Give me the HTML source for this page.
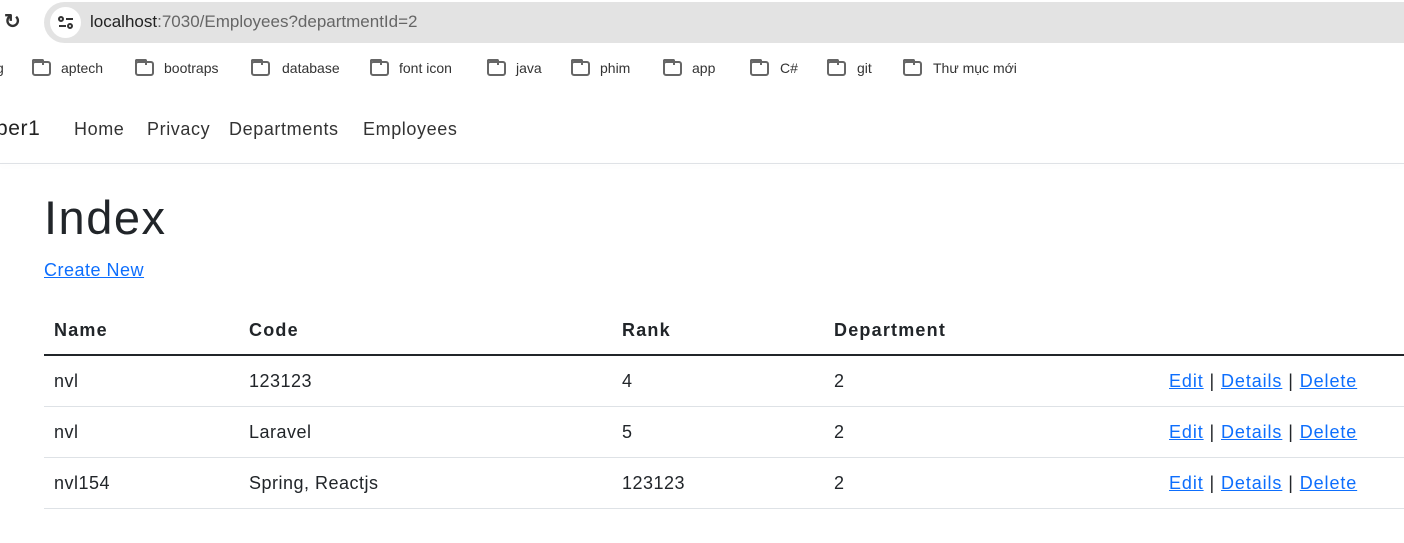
<!DOCTYPE html>
<html><head><meta charset="utf-8"><style>
*{margin:0;padding:0;box-sizing:border-box}
body{width:1404px;height:543px;overflow:hidden;background:#fff;font-family:"Liberation Sans",sans-serif;color:#212529;position:relative}
.abs{position:absolute;white-space:nowrap}
.addr{position:absolute;left:44px;top:2px;width:1380px;height:41px;background:#e3e3e3;border-radius:21px}
.lock{position:absolute;left:50px;top:7px;width:31px;height:31px;border-radius:50%;background:#fff}
.bm{position:absolute;top:60px;font-size:14px;color:#333}
.fold{position:absolute;top:61px;width:19px;height:15px;border:2px solid #666;border-radius:3px}
.fold:before{content:"";position:absolute;left:-2px;top:-4px;width:8px;height:4px;border:2px solid #666;border-bottom:none;border-radius:2px 2px 0 0}
.nav{position:absolute;top:119px;font-size:18px;color:#333;letter-spacing:0.6px}
a{color:#0d6efd;text-decoration:underline}
.hl{position:absolute;left:44px;width:1360px;height:1px;background:#dee2e6}
.r{position:absolute;font-size:18px;white-space:nowrap;letter-spacing:0.5px}
.b{font-weight:bold;letter-spacing:1.2px}
</style></head><body>
<div class="abs" style="left:4px;top:9px;font-size:20px;font-weight:bold;color:#333">↻</div>
<div class="addr"></div><div class="lock"></div>
<svg class="abs" style="left:56px;top:13px" width="20" height="20" viewBox="0 0 20 20" fill="none" stroke="#333" stroke-width="2"><circle cx="5" cy="6" r="2"/><line x1="10" y1="6" x2="17" y2="6"/><circle cx="14" cy="13" r="2"/><line x1="3" y1="13" x2="10" y2="13"/></svg>
<div class="abs" style="left:90px;top:12px;font-size:17px;color:#222">localhost<span style="color:#666">:7030/Employees?departmentId=2</span></div>
<div class="bm" style="left:-4px">g</div>
<div class="fold" style="left:32px"></div><div class="bm" style="left:61px">aptech</div>
<div class="fold" style="left:135px"></div><div class="bm" style="left:164px">bootraps</div>
<div class="fold" style="left:251px"></div><div class="bm" style="left:282px">database</div>
<div class="fold" style="left:370px"></div><div class="bm" style="left:399px">font icon</div>
<div class="fold" style="left:487px"></div><div class="bm" style="left:516px">java</div>
<div class="fold" style="left:571px"></div><div class="bm" style="left:600px">phim</div>
<div class="fold" style="left:663px"></div><div class="bm" style="left:692px">app</div>
<div class="fold" style="left:750px"></div><div class="bm" style="left:780px">C#</div>
<div class="fold" style="left:827px"></div><div class="bm" style="left:857px">git</div>
<div class="fold" style="left:903px"></div><div class="bm" style="left:933px">Thư mục mới</div>
<div class="abs" style="left:-4px;top:117px;font-size:21px;color:#222;letter-spacing:0.6px">per1</div>
<div class="nav" style="left:74px">Home</div>
<div class="nav" style="left:147px">Privacy</div>
<div class="nav" style="left:229px">Departments</div>
<div class="nav" style="left:363px">Employees</div>
<div class="abs" style="left:0;top:163px;width:1404px;height:1px;background:#dfe2e6;box-shadow:0 2px 6px rgba(0,0,0,.06)"></div>
<div class="abs" style="left:44px;top:190px;font-size:47px;font-weight:500;letter-spacing:1.5px">Index</div>
<div class="r" style="left:44px;top:260px"><a>Create New</a></div>
<div class="r b" style="left:54px;top:320px">Name</div>
<div class="r b" style="left:249px;top:320px">Code</div>
<div class="r b" style="left:622px;top:320px">Rank</div>
<div class="r b" style="left:834px;top:320px">Department</div>
<div class="hl" style="top:354px;height:2px;background:#212529"></div>
<div class="r" style="left:54px;top:371px">nvl</div><div class="r" style="left:249px;top:371px">123123</div><div class="r" style="left:622px;top:371px">4</div><div class="r" style="left:834px;top:371px">2</div>
<div class="r" style="left:1169px;top:371px;letter-spacing:0.9px"><a>Edit</a> | <a>Details</a> | <a>Delete</a></div>
<div class="hl" style="top:406px"></div>
<div class="r" style="left:54px;top:422px">nvl</div><div class="r" style="left:249px;top:422px">Laravel</div><div class="r" style="left:622px;top:422px">5</div><div class="r" style="left:834px;top:422px">2</div>
<div class="r" style="left:1169px;top:422px;letter-spacing:0.9px"><a>Edit</a> | <a>Details</a> | <a>Delete</a></div>
<div class="hl" style="top:457px"></div>
<div class="r" style="left:54px;top:473px">nvl154</div><div class="r" style="left:249px;top:473px">Spring, Reactjs</div><div class="r" style="left:622px;top:473px">123123</div><div class="r" style="left:834px;top:473px">2</div>
<div class="r" style="left:1169px;top:473px;letter-spacing:0.9px"><a>Edit</a> | <a>Details</a> | <a>Delete</a></div>
<div class="hl" style="top:508px"></div>
</body></html>
